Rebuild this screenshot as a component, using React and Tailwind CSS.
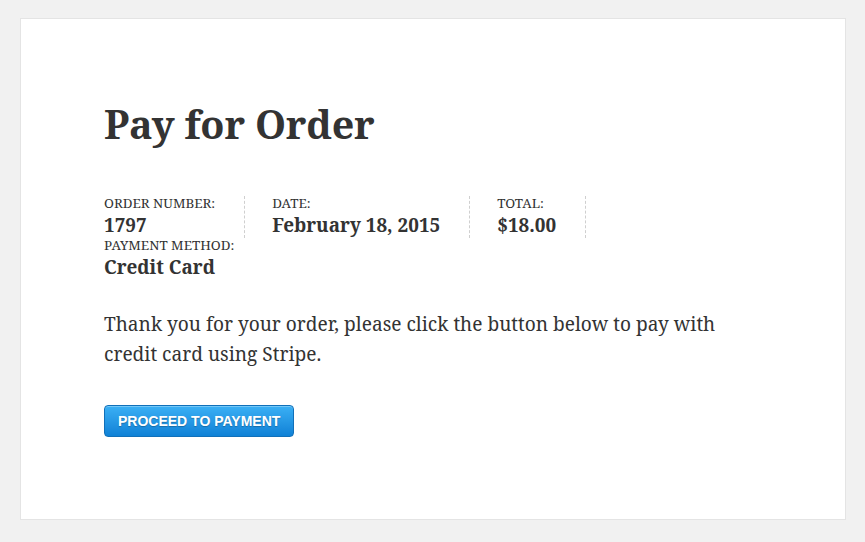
import React from "react";

const details = [
  { label: "Order Number:", value: "1797" },
  { label: "Date:", value: "February 18, 2015" },
  { label: "Total:", value: "$18.00" },
];

const serif = { fontFamily: '"Noto Serif", "DejaVu Serif", "Liberation Serif", serif' };

function Detail({ label, value }) {
  return (
    <>
      <div className="uppercase text-[13.4px] leading-[16px] -mt-px">{label}</div>
      <div className="text-[18.9px] font-bold leading-[26px] mt-px">{value}</div>
    </>
  );
}

export default function App() {
  return (
    <div className="min-h-screen bg-[#f1f1f1] pt-[18px] pl-5 pr-[19px] pb-[22px]" style={serif}>
      <div className="bg-white border border-[#e4e4e4] h-[502px] pl-[83px] pr-[80px] pt-[84px] text-[#333]">
        <h1 className="text-[39.5px] font-bold leading-[1.1] tracking-[-0.2px]">Pay for Order</h1>

        <ul className="mt-[50px] flex flex-wrap">
          {details.map((d) => (
            <li
              key={d.label}
              className="mr-[27px] pr-[29px] border-r border-dashed border-[#cfcfcf]"
            >
              <Detail label={d.label} value={d.value} />
            </li>
          ))}
          <li className="basis-full">
            <Detail label="Payment Method:" value="Credit Card" />
          </li>
        </ul>

        <p className="mt-[29px] text-[19.1px] leading-[30px] max-w-[650px]">
          Thank you for your order, please click the button below to pay with credit card using Stripe.
        </p>

        <button
          className="mt-[36px] h-[32px] px-[13px] rounded-[4px] border border-[#1170b9] bg-gradient-to-b from-[#3ab0f5] to-[#0e81d6] text-white text-[14px] font-bold uppercase shadow-[inset_0_1px_0_rgba(255,255,255,0.3)] [text-shadow:0_1px_1px_rgba(0,0,0,0.25)]"
          style={{ fontFamily: '"Liberation Sans", Arial, sans-serif' }}
        >
          Proceed to Payment
        </button>
      </div>
    </div>
  );
}
